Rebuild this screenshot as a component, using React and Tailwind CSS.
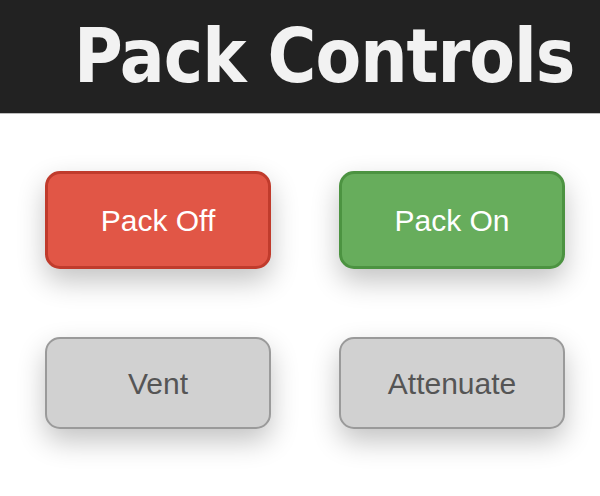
import React from 'react';

const buttons = [
  { label: 'Pack Off', cls: 'h-[98px] bg-[#e15646] border-[3px] border-[#c03b2c] text-white' },
  { label: 'Pack On', cls: 'h-[98px] bg-[#67ad5c] border-[3px] border-[#4c9341] text-white' },
  { label: 'Vent', cls: 'h-[92px] bg-[#d1d1d1] border-2 border-[#9a9a9a] text-[#555]' },
  { label: 'Attenuate', cls: 'h-[92px] bg-[#d1d1d1] border-2 border-[#9a9a9a] text-[#555]' },
];

const App = () => {
  return (
    <div className="w-[600px] h-[496px] bg-white overflow-hidden">
      <div className="h-[114px] bg-[#222] border-b border-[#bdbdbd] flex items-center pl-[74px]">
        <h1
          className="text-[74px] font-bold text-[#f2f2f2] leading-none tracking-[-1px] -mt-[2px]"
          style={{ fontFamily: '"DejaVu Sans Condensed", "DejaVu Sans", sans-serif' }}
        >
          Pack Controls
        </h1>
      </div>
      <div className="grid grid-cols-[226px_226px] gap-x-[68px] gap-y-[68px] pl-[45px] pt-[57px] items-start">
        {buttons.map((b) => (
          <button
            key={b.label}
            className={`${b.cls} w-[226px] rounded-[15px] text-[30px] shadow-[0_12px_28px_rgba(0,0,0,0.24)]`}
            style={{ fontFamily: '"Liberation Sans", Arial, sans-serif' }}
          >
            {b.label}
          </button>
        ))}
      </div>
    </div>
  );
};

export default App;
